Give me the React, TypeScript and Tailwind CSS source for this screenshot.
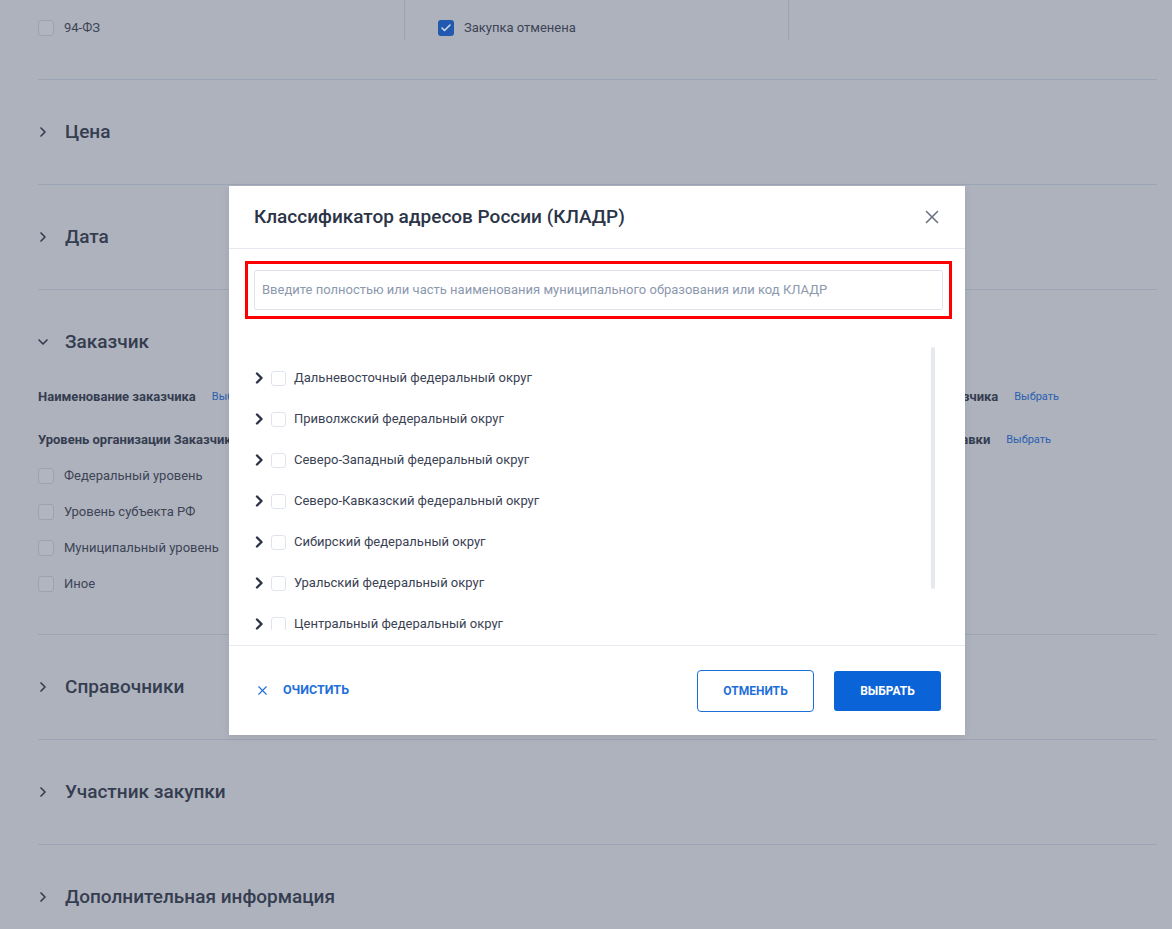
import { ChevronRight, ChevronDown, X, Check } from 'lucide-react';

const LEVELS = ['Федеральный уровень', 'Уровень субъекта РФ', 'Муниципальный уровень', 'Иное'];

const DISTRICTS = [
  'Дальневосточный федеральный округ',
  'Приволжский федеральный округ',
  'Северо-Западный федеральный округ',
  'Северо-Кавказский федеральный округ',
  'Сибирский федеральный округ',
  'Уральский федеральный округ',
  'Центральный федеральный округ',
];

const COLLAPSED_BOTTOM = ['Справочники', 'Участник закупки', 'Дополнительная информация'];

function BgCheckbox({ checked = false }: { checked?: boolean }) {
  if (checked) {
    return (
      <span className="w-4 h-4 rounded-[3px] bg-[#2159b0] flex items-center justify-center shrink-0">
        <Check className="w-3 h-3 text-[#d8dde6]" strokeWidth={3} />
      </span>
    );
  }
  return <span className="w-4 h-4 rounded-[3px] border border-[#9ca2ae] bg-[#b1b5c0] shrink-0" />;
}

function Section({ title }: { title: string }) {
  return (
    <div className="h-[105px] border-b border-[#9ca5b6] flex items-center gap-[14px]">
      <ChevronRight className="-ml-[3px] w-[16px] h-[16px] text-[#353d50]" strokeWidth={2.5} />
      <span className="text-[19px] font-medium text-[#353d50]">{title}</span>
    </div>
  );
}

function TreeChevron() {
  return (
    <svg width="9" height="12" viewBox="0 0 9 12" className="shrink-0">
      <path d="M2 1.5 L6.5 6 L2 10.5" fill="none" stroke="#2b3447" strokeWidth="2.4" strokeLinecap="round" strokeLinejoin="round" />
    </svg>
  );
}

export default function App() {
  return (
    <div
      className="relative w-[1172px] h-[929px] overflow-hidden bg-[#aeb2bd]"
      style={{ fontFamily: 'Roboto, "Liberation Sans", sans-serif' }}
    >
      <div className="ml-[38px] w-[1119px]">
        {/* top row */}
        <div className="h-[80px] border-b border-[#9ca5b6] flex items-start">
          <div className="w-[367px] h-[40px] border-r border-[#9ca5b6] flex items-center gap-[10px] pt-[16px]">
            <BgCheckbox />
            <span className="text-[13px] text-[#3c4456]">94-ФЗ</span>
          </div>
          <div className="w-[384px] h-[40px] border-r border-[#9ca5b6] flex items-center gap-[10px] pl-[33px] pt-[16px]">
            <BgCheckbox checked />
            <span className="text-[13px] text-[#3c4456]">Закупка отменена</span>
          </div>
        </div>

        <Section title="Цена" />
        <Section title="Дата" />

        {/* customer section */}
        <div className="h-[345px] border-b border-[#9ca5b6]">
          <div className="h-[98px] pt-[6px] flex items-center gap-[14px]">
            <ChevronDown className="-ml-[3px] w-[16px] h-[16px] text-[#353d50]" strokeWidth={2.5} />
            <span className="text-[19px] font-medium text-[#353d50]">Заказчик</span>
          </div>
          <div className="flex justify-between">
            <div className="flex flex-col">
              <div className="h-[18px] flex items-center gap-4">
                <span className="text-[13px] font-bold text-[#353d50]">Наименование заказчика</span>
                <span className="text-[11px] text-[#2b5fb0]">Выбрать</span>
              </div>
              <div className="h-[18px] mt-[25px] flex items-center">
                <span className="text-[13px] font-bold text-[#353d50]">Уровень организации Заказчика</span>
              </div>
              <div className="mt-[19px] flex flex-col gap-[20px]">
                {LEVELS.map((l) => (
                  <div key={l} className="h-4 flex items-center gap-[10px]">
                    <BgCheckbox />
                    <span className="text-[13px] text-[#3c4456]">{l}</span>
                  </div>
                ))}
              </div>
            </div>
            <div className="flex flex-col items-end pr-[98px]">
              <div className="h-[18px] flex items-center gap-4">
                <span className="text-[13px] font-bold text-[#353d50]">Регион заказчика</span>
                <span className="text-[11px] text-[#2b5fb0]">Выбрать</span>
              </div>
              <div className="h-[18px] mt-[25px] flex items-center gap-4 mr-[8px]">
                <span className="text-[13px] font-bold text-[#353d50]">Место поставки</span>
                <span className="text-[11px] text-[#2b5fb0]">Выбрать</span>
              </div>
            </div>
          </div>
        </div>

        {COLLAPSED_BOTTOM.map((t) => (
          <Section key={t} title={t} />
        ))}
      </div>

      {/* modal */}
      <div className="absolute left-[229px] top-[186px] w-[736px] h-[549px] bg-white flex flex-col shadow-[0_2px_8px_rgba(0,0,0,0.08)]">
        <div className="h-[63px] border-b border-[#e6e9ef] flex items-center justify-between pl-[25px] pr-[22px] shrink-0">
          <span className="text-[19px] font-medium text-[#2b3447]">Классификатор адресов России (КЛАДР)</span>
          <X className="w-[22px] h-[22px] text-[#6b7385]" strokeWidth={1.75} />
        </div>
        <div className="ml-[16px] mr-[13px] mt-[12px] border-[3px] border-[#ff0000] p-[6px] shrink-0">
          <div className="h-[40px] border border-[#dfe4ec] rounded-[2px] flex items-center px-[7px]">
            <span className="text-[13px] text-[#8c98ae]">
              Введите полностью или часть наименования муниципального образования или код КЛАДР
            </span>
          </div>
        </div>
        <div className="h-[327px] pt-[16px] pb-[15px] border-b border-[#e6e9ef] shrink-0">
          <div className="relative h-full overflow-hidden">
            <div className="flex flex-col pt-[35px] pl-[26px] gap-[25px]">
              {DISTRICTS.map((d) => (
                <div key={d} className="h-4 flex items-center">
                  <TreeChevron />
                  <span className="ml-[7px] w-[15px] h-[15px] rounded-[3px] border border-[#dfe4ec]" />
                  <span className="ml-[8px] text-[13px] text-[#3a4254]">{d}</span>
                </div>
              ))}
            </div>
            <div className="absolute left-[702px] top-[12px] w-[4px] h-[242px] rounded bg-[#e4e8ef]" />
          </div>
        </div>
        <div className="flex-1 flex items-center justify-between pl-[26px] pr-[24px]">
          <div className="flex items-center gap-[13px] text-[#1f6fd9]">
            <X className="w-[15px] h-[15px]" strokeWidth={1.75} />
            <span className="text-[12.5px] font-bold uppercase">Очистить</span>
          </div>
          <div className="flex items-center gap-[20px]">
            <button className="w-[117px] h-[42px] rounded-[4px] border border-[#1f6fd9] text-[#1f6fd9] text-[12px] font-bold uppercase">
              Отменить
            </button>
            <button className="w-[107px] h-[40px] rounded-[3px] bg-[#0a64d8] text-white text-[12px] font-bold uppercase">
              Выбрать
            </button>
          </div>
        </div>
      </div>
    </div>
  );
}
